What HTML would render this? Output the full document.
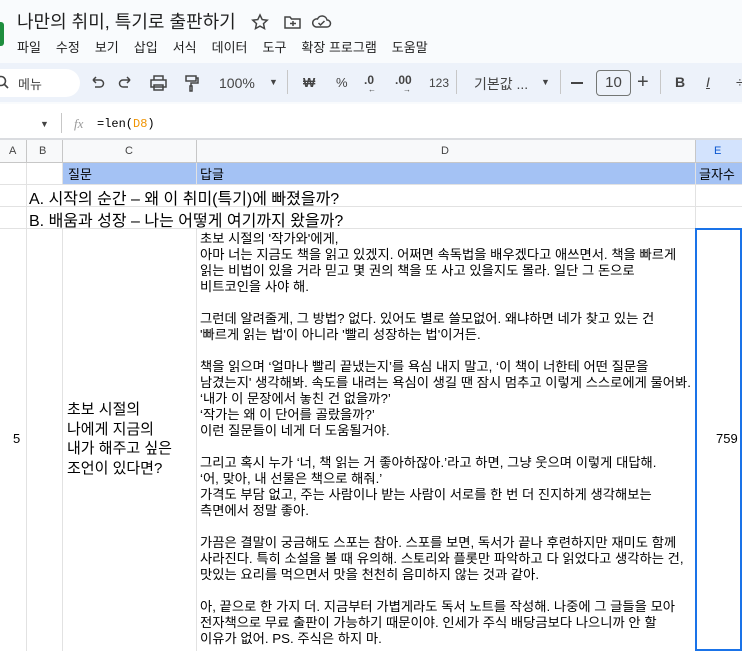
<!DOCTYPE html>
<html><head><meta charset="utf-8"><style>
*{margin:0;padding:0;box-sizing:border-box}
body{width:742px;height:651px;overflow:hidden;background:#fff;font-family:"Liberation Sans","Noto Sans CJK KR",sans-serif;color:#1f1f1f;position:relative}
.a{position:absolute;white-space:nowrap}
.top{position:absolute;left:0;top:0;width:742px;height:104px;background:#f9fbfd}
.tb{position:absolute;left:0;top:63px;width:742px;height:39px;background:#edf2fa;border-radius:0}
.menu span{margin-right:15px}
.g{position:absolute;background:#e2e2e2}
.h{position:absolute;background:#c7c7c7}
.txt{font-size:13.3px;line-height:16px;color:#000}
.txt div{height:16px;line-height:16px;overflow:visible}
</style></head><body>
<div class="top"></div>
<div class="a" style="left:0;top:22px;width:4px;height:24px;background:#1e8e3e;border-radius:0 3px 3px 0"></div>
<div class="a" style="left:17px;top:8px;font-size:18px;color:#1f1f1f">나만의 취미, 특기로 출판하기</div>
<svg class="a" style="left:250px;top:12px" width="90" height="20" viewBox="0 0 90 20" fill="none" stroke="#444" stroke-width="1.5"><path d="M10 3l2.2 4.6 5 .6-3.7 3.4 1 5-4.5-2.5-4.5 2.5 1-5L2.8 8.2l5-.6z"/><path d="M35 5h5l1.5 2H50v9H35z"/><path d="M40 11.5h6M43 9v5"/><path d="M66 15h11a3.5 3.5 0 0 0 0-7 5 5 0 0 0-9.5-1A4 4 0 0 0 66 15z"/><path d="M68.5 11l2 2 4-4"/></svg>
<div class="a menu" style="left:17px;top:37px;font-size:13px;color:#1f1f1f"><span>파일</span><span>수정</span><span>보기</span><span>삽입</span><span>서식</span><span>데이터</span><span>도구</span><span>확장 프로그램</span><span>도움말</span></div>
<div class="tb"></div>
<div class="a" style="left:-20px;top:69px;width:100px;height:28px;background:#fff;border-radius:14px"></div>
<svg class="a" style="left:0;top:75px" width="10" height="16"><circle cx="1" cy="6" r="4.5" fill="none" stroke="#444" stroke-width="1.6"/><path d="M4 9l4 4" stroke="#444" stroke-width="1.6"/></svg>
<div class="a" style="left:18px;top:74px;font-size:13px;color:#444">메뉴</div>
<svg class="a" style="left:88px;top:72px" width="200" height="22" fill="none" stroke="#444" stroke-width="1.5"><path d="M5 8h7a3.5 3.5 0 0 1 0 7H7M5 8l3-3M5 8l3 3"/><path d="M42 8h-7a3.5 3.5 0 0 0 0 7h5M42 8l-3-3M42 8l-3 3"/><path d="M66 8V4h9v4M63 8h15v7H63zM66 13h9v5h-9z"/><path d="M98 4h10v5H98zM108 6h2v5h-7v3M102 14h2v5h-2z"/></svg>
<div class="a" style="left:219px;top:75px;font-size:14px;color:#444">100%</div>
<div class="a" style="left:269px;top:77px;font-size:9px;color:#444">▼</div>
<div class="a" style="left:287px;top:70px;width:1px;height:24px;background:#c7c7c7"></div>
<div class="a" style="left:303px;top:75px;font-size:13px;color:#444;font-weight:bold">₩</div>
<div class="a" style="left:336px;top:75px;font-size:13px;color:#444">%</div>
<div class="a" style="left:364px;top:73px;font-size:12px;color:#444;font-weight:bold">.0</div>
<div class="a" style="left:368px;top:85px;font-size:8px;color:#444">←</div>
<div class="a" style="left:395px;top:73px;font-size:12px;color:#444;font-weight:bold">.00</div>
<div class="a" style="left:403px;top:85px;font-size:8px;color:#444">→</div>
<div class="a" style="left:429px;top:76px;font-size:12px;color:#444">123</div>
<div class="a" style="left:456px;top:70px;width:1px;height:24px;background:#c7c7c7"></div>
<div class="a" style="left:474px;top:74px;font-size:14px;color:#444">기본값 ...</div>
<div class="a" style="left:541px;top:77px;font-size:9px;color:#444">▼</div>
<div class="a" style="left:560px;top:70px;width:1px;height:24px;background:#c7c7c7"></div>
<div class="a" style="left:571px;top:82px;width:12px;height:2px;background:#444"></div>
<div class="a" style="left:596px;top:70px;width:35px;height:26px;border:1px solid #747775;border-radius:4px;font-size:15px;color:#444;text-align:center;line-height:24px">10</div>
<div class="a" style="left:637px;top:71px;font-size:20px;color:#444">+</div>
<div class="a" style="left:660px;top:70px;width:1px;height:24px;background:#c7c7c7"></div>
<div class="a" style="left:675px;top:74px;font-size:14px;color:#444;font-weight:bold">B</div>
<div class="a" style="left:706px;top:74px;font-size:14px;color:#444;font-style:italic;text-decoration:underline">I</div>
<div class="a" style="left:736px;top:74px;font-size:14px;color:#444">÷</div>
<div class="a" style="left:40px;top:119px;font-size:9px;color:#444">▼</div>
<div class="a" style="left:61px;top:113px;width:1px;height:20px;background:#c7c7c7"></div>
<div class="a" style="left:74px;top:116px;font-size:13px;color:#999;font-style:italic;font-family:'Liberation Serif',serif">fx</div>
<div class="a" style="left:97px;top:117px;font-size:12px;font-family:'Liberation Mono',monospace;color:#000">=len(<span style="color:#f09300">D8</span>)</div>
<div class="a" style="left:0;top:138px;width:742px;height:2px;background:#dadce0"></div>
<div class="a" style="left:0;top:140px;width:742px;height:22px;background:#f8f9fa"></div>
<div class="a" style="left:695px;top:140px;width:47px;height:22px;background:#d3e3fd"></div>
<div class="h" style="left:0;top:162px;width:742px;height:1px"></div>
<div class="a" style="left:9px;top:145px;font-size:11px;color:#444">A</div>
<div class="a" style="left:39px;top:145px;font-size:11px;color:#444">B</div>
<div class="a" style="left:125px;top:145px;font-size:11px;color:#444">C</div>
<div class="a" style="left:441px;top:145px;font-size:11px;color:#444">D</div>
<div class="a" style="left:714px;top:145px;font-size:11px;color:#0b57d0">E</div>
<div class="a" style="left:62px;top:163px;width:680px;height:21px;background:#a4c2f4"></div>
<div class="a" style="left:68px;top:164px;font-size:13px;color:#000">질문</div>
<div class="a" style="left:200px;top:164px;font-size:13px;color:#000">답글</div>
<div class="a" style="left:699px;top:164px;font-size:13px;color:#000">글자수</div>
<div class="h" style="left:26px;top:140px;width:1px;height:22px"></div>
<div class="h" style="left:62px;top:140px;width:1px;height:22px"></div>
<div class="h" style="left:196px;top:140px;width:1px;height:22px"></div>
<div class="h" style="left:695px;top:140px;width:1px;height:22px"></div>
<div class="g" style="left:0;top:184px;width:742px;height:1px"></div>
<div class="g" style="left:0;top:206px;width:742px;height:1px"></div>
<div class="g" style="left:0;top:228px;width:742px;height:1px"></div>
<div class="g" style="left:26px;top:163px;width:1px;height:488px"></div>
<div class="g" style="left:62px;top:163px;width:1px;height:21px"></div>
<div class="g" style="left:62px;top:228px;width:1px;height:423px"></div>
<div class="g" style="left:196px;top:163px;width:1px;height:21px"></div>
<div class="g" style="left:196px;top:228px;width:1px;height:423px"></div>
<div class="g" style="left:695px;top:163px;width:1px;height:488px"></div>
<div class="a" style="left:29px;top:185px;font-size:16px;color:#000">A. 시작의 순간 – 왜 이 취미(특기)에 빠졌을까?</div>
<div class="a" style="left:29px;top:207px;font-size:16px;color:#000">B. 배움과 성장 – 나는 어떻게 여기까지 왔을까?</div>
<div class="a" style="left:13px;top:431px;font-size:13px;color:#000">5</div>
<div class="a" style="left:67px;top:400px;font-size:15px;line-height:19.5px;color:#000">초보 시절의<br>나에게 지금의<br>내가 해주고 싶은<br>조언이 있다면?</div>
<div class="a txt" style="left:200px;top:231px">
<div>초보 시절의 '작가와'에게,</div>
<div>아마 너는 지금도 책을 읽고 있겠지. 어쩌면 속독법을 배우겠다고 애쓰면서. 책을 빠르게</div>
<div>읽는 비법이 있을 거라 믿고 몇 권의 책을 또 사고 있을지도 몰라. 일단 그 돈으로</div>
<div>비트코인을 사야 해.</div>
<div></div>
<div>그런데 알려줄게, 그 방법? 없다. 있어도 별로 쓸모없어. 왜냐하면 네가 찾고 있는 건</div>
<div>'빠르게 읽는 법'이 아니라 '빨리 성장하는 법'이거든.</div>
<div></div>
<div>책을 읽으며 ‘얼마나 빨리 끝냈는지’를 욕심 내지 말고, ‘이 책이 너한테 어떤 질문을</div>
<div>남겼는지' 생각해봐. 속도를 내려는 욕심이 생길 땐 잠시 멈추고 이렇게 스스로에게 물어봐.</div>
<div>‘내가 이 문장에서 놓친 건 없을까?’</div>
<div>‘작가는 왜 이 단어를 골랐을까?’</div>
<div>이런 질문들이 네게 더 도움될거야.</div>
<div></div>
<div>그리고 혹시 누가 ‘너, 책 읽는 거 좋아하잖아.’라고 하면, 그냥 웃으며 이렇게 대답해.</div>
<div>‘어, 맞아, 내 선물은 책으로 해줘.’</div>
<div>가격도 부담 없고, 주는 사람이나 받는 사람이 서로를 한 번 더 진지하게 생각해보는</div>
<div>측면에서 정말 좋아.</div>
<div></div>
<div>가끔은 결말이 궁금해도 스포는 참아. 스포를 보면, 독서가 끝나 후련하지만 재미도 함께</div>
<div>사라진다. 특히 소설을 볼 때 유의해. 스토리와 플롯만 파악하고 다 읽었다고 생각하는 건,</div>
<div>맛있는 요리를 먹으면서 맛을 천천히 음미하지 않는 것과 같아.</div>
<div></div>
<div>아, 끝으로 한 가지 더. 지금부터 가볍게라도 독서 노트를 작성해. 나중에 그 글들을 모아</div>
<div>전자책으로 무료 출판이 가능하기 때문이야. 인세가 주식 배당금보다 나으니까 안 할</div>
<div>이유가 없어. PS. 주식은 하지 마.</div>
</div>
<div class="a" style="left:716px;top:431px;font-size:13px;color:#000">759</div>
<div class="a" style="left:695px;top:228px;width:47px;height:423px;border:2px solid #1a73e8"></div>
</body></html>
